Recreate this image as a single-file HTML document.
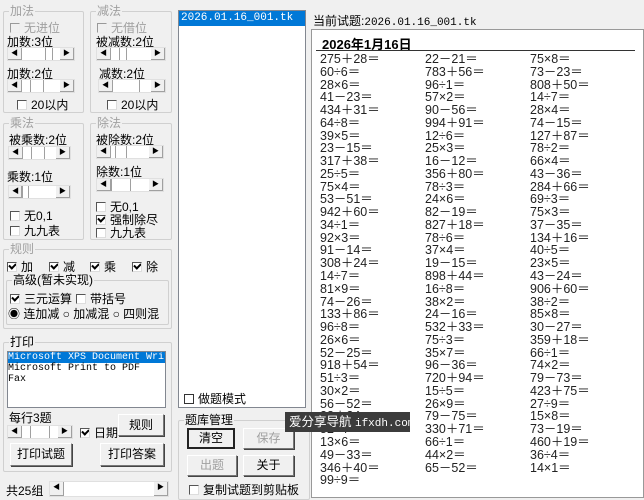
<!DOCTYPE html>
<html><head><meta charset="utf-8"><style>
*{box-sizing:border-box;margin:0;padding:0}
body{width:644px;height:498px;background:#f0f0f0;position:relative;overflow:hidden;font-family:"Liberation Sans","Noto Sans CJK SC",sans-serif;font-size:12px;color:#000}
.a{position:absolute;white-space:nowrap}
.g{position:absolute;border:1px solid #d0d0d0;border-radius:2px}
.gt{position:absolute;top:-8px;left:5px;background:#f0f0f0;padding:0 1px;font-size:12px;line-height:14px}
.dis{color:#a0a0a0}
.sb{position:absolute;height:14px;background:#fff;border:1px solid #e0e0e0}
.sb .l,.sb .r{position:absolute;top:0;width:14px;height:12px;background:#f0f0f0;border-right:1px solid #a0a0a0;border-bottom:1px solid #a0a0a0;font-size:7px;line-height:12px;text-align:center}
.sb .l{left:0}.sb .r{right:0}
.sb .t{position:absolute;top:0;height:12px;border-left:1px solid #a0a0a0;border-right:1px solid #a0a0a0}
.cb{display:inline-block;width:10px;height:10px;border:1px solid #555;border-right-color:#ddd;border-bottom-color:#ddd;background:#fff;vertical-align:-1px;margin-right:4px;font-size:9px;line-height:8px;text-align:center;position:relative;overflow:hidden}
.ck::after{content:"";position:absolute;left:1px;top:0px;width:5px;height:3px;border-left:2px solid #000;border-bottom:2px solid #000;transform:rotate(-45deg)}
.btn{position:absolute;background:#f0f0f0;border:1px solid;border-color:#fff #777 #777 #fff;box-shadow:1px 1px 0 #444;text-align:center;font-size:12px}
.col{position:absolute;top:53px;line-height:12.76px;font-size:12.5px;white-space:pre;font-family:"Liberation Sans","Noto Sans CJK SC",sans-serif;color:#222}
</style></head><body>

<div class="g" style="left:3px;top:11px;width:81px;height:102px"><span class="gt dis">加法</span></div>
<div class="a dis" style="left:10px;top:19px"><span class="cb" style="border-color:#999 #eee #eee #999;background:#f0f0f0"></span>无进位</div>
<div class="a" style="left:7px;top:33px">加数:3位</div>
<div class="sb" style="left:7px;top:47px;width:68px"><div class="l">◀</div><div class="t" style="left:37px;width:8px"></div><div class="r">▶</div></div>
<div class="a" style="left:7px;top:65px">加数:2位</div>
<div class="sb" style="left:7px;top:79px;width:68px"><div class="l">◀</div><div class="t" style="left:22px;width:14px"></div><div class="r">▶</div></div>
<div class="a" style="left:17px;top:96px"><span class="cb"></span>20以内</div>

<div class="g" style="left:90px;top:11px;width:82px;height:102px"><span class="gt dis">减法</span></div>
<div class="a dis" style="left:97px;top:19px"><span class="cb" style="border-color:#999 #eee #eee #999;background:#f0f0f0"></span>无借位</div>
<div class="a" style="left:96px;top:33px">被减数:2位</div>
<div class="sb" style="left:96px;top:47px;width:70px"><div class="l">◀</div><div class="t" style="left:22px;width:8px"></div><div class="r">▶</div></div>
<div class="a" style="left:99px;top:65px">减数:2位</div>
<div class="sb" style="left:98px;top:79px;width:68px"><div class="l">◀</div><div class="t" style="left:40px;width:14px"></div><div class="r">▶</div></div>
<div class="a" style="left:107px;top:96px"><span class="cb"></span>20以内</div>

<div class="g" style="left:3px;top:123px;width:81px;height:117px"><span class="gt dis">乘法</span></div>
<div class="a" style="left:9px;top:131px">被乘数:2位</div>
<div class="sb" style="left:8px;top:146px;width:63px"><div class="l">◀</div><div class="t" style="left:22px;width:14px"></div><div class="r">▶</div></div>
<div class="a" style="left:7px;top:168px">乘数:1位</div>
<div class="sb" style="left:8px;top:185px;width:63px"><div class="l">◀</div><div class="t" style="left:12px;width:8px"></div><div class="r">▶</div></div>
<div class="a" style="left:10px;top:207px"><span class="cb"></span>无0,1</div>
<div class="a" style="left:10px;top:222px"><span class="cb"></span>九九表</div>

<div class="g" style="left:90px;top:123px;width:82px;height:117px"><span class="gt dis">除法</span></div>
<div class="a" style="left:96px;top:131px">被除数:2位</div>
<div class="sb" style="left:96px;top:145px;width:68px"><div class="l">◀</div><div class="t" style="left:18px;width:12px"></div><div class="r">▶</div></div>
<div class="a" style="left:96px;top:163px">除数:1位</div>
<div class="sb" style="left:96px;top:178px;width:68px"><div class="l">◀</div><div class="t" style="left:14px;width:20px"></div><div class="r">▶</div></div>
<div class="a" style="left:96px;top:198px"><span class="cb"></span>无0,1</div>
<div class="a" style="left:96px;top:211px"><span class="cb ck"></span>强制除尽</div>
<div class="a" style="left:96px;top:224px"><span class="cb"></span>九九表</div>

<div class="g" style="left:3px;top:249px;width:169px;height:80px"><span class="gt dis">规则</span></div>
<div class="a" style="left:7px;top:258px"><span class="cb ck"></span>加</div>
<div class="a" style="left:49px;top:258px"><span class="cb ck"></span>减</div>
<div class="a" style="left:90px;top:258px"><span class="cb ck"></span>乘</div>
<div class="a" style="left:132px;top:258px"><span class="cb ck"></span>除</div>
<div class="g" style="left:6px;top:280px;width:163px;height:45px"><span class="gt">高级(暂未实现)</span></div>
<div class="a" style="left:10px;top:290px"><span class="cb ck"></span>三元运算</div>
<div class="a" style="left:76px;top:290px"><span class="cb"></span>带括号</div>
<div class="a" style="left:8px;top:305px">◉ 连加减 ○ 加减混 ○ 四则混</div>

<div class="g" style="left:3px;top:342px;width:169px;height:130px"><span class="gt">打印</span></div>
<div class="a" style="left:7px;top:351px;width:159px;height:57px;background:#fff;border:1px solid #828790;font-family:'Liberation Mono',monospace;font-size:10px;line-height:11px;overflow:hidden">
<div style="background:#0078d7;color:#fff">Microsoft XPS Document Writer</div><div>Microsoft Print to PDF</div><div>Fax</div></div>
<div class="a" style="left:9px;top:409px">每行3题</div>
<div class="sb" style="left:7px;top:425px;width:66px"><div class="l">◀</div><div class="t" style="left:22px;width:20px"></div><div class="r">▶</div></div>
<div class="a" style="left:80px;top:424px"><span class="cb ck"></span>日期</div>
<div class="btn" style="left:118px;top:414px;width:46px;height:22px;line-height:20px">规则</div>
<div class="btn" style="left:10px;top:443px;width:62px;height:23px;line-height:21px">打印试题</div>
<div class="btn" style="left:100px;top:443px;width:64px;height:23px;line-height:21px">打印答案</div>

<div class="a" style="left:6px;top:482px">共25组</div>
<div class="sb" style="left:49px;top:481px;width:120px;height:16px"><div class="l" style="height:14px">◀</div><div class="r" style="height:14px">▶</div></div>

<div class="a" style="left:178px;top:10px;width:128px;height:398px;background:#fff;border:1px solid #828790"></div>
<div class="a" style="left:179px;top:11px;width:126px;height:15px;background:#0078d7;color:#fff;font-family:'Liberation Mono','Noto Sans CJK SC',monospace;font-size:11px;line-height:15px;padding-left:2px">2026.01.16_001.tk</div>
<div class="a" style="left:184px;top:390px"><span class="cb" style="border-color:#333"></span>做题模式</div>

<div class="g" style="left:178px;top:420px;width:132px;height:80px"><span class="gt">题库管理</span></div>
<div class="btn" style="left:187px;top:428px;width:48px;height:21px;line-height:17px;border:2px solid #222;box-shadow:none">清空</div>
<div class="btn dis" style="left:243px;top:428px;width:51px;height:21px;line-height:19px">保存</div>
<div class="btn dis" style="left:187px;top:455px;width:50px;height:21px;line-height:19px">出题</div>
<div class="btn" style="left:243px;top:455px;width:51px;height:21px;line-height:19px">关于</div>
<div class="a" style="left:189px;top:481px"><span class="cb"></span>复制试题到剪贴板</div>

<div class="a" style="left:313px;top:12px;font-size:12px">当前试题:<span style="font-family:'Liberation Mono',monospace;font-size:11px">2026.01.16_001.tk</span></div>
<div class="a" style="left:311px;top:29px;width:333px;height:469px;background:#fff;border:1px solid #999"></div>
<div class="a" style="left:322px;top:34px;font-weight:bold;font-size:13px">2026年1月16日</div>
<div class="a" style="left:316px;top:50px;width:319px;height:1px;background:#333"></div>
<div class="col" style="left:320px">275＋28＝
60÷6＝
28×6＝
41－23＝
434＋31＝
64÷8＝
39×5＝
23－15＝
317＋38＝
25÷5＝
75×4＝
53－51＝
942＋60＝
34÷1＝
92×3＝
91－14＝
308＋24＝
14÷7＝
81×9＝
74－26＝
133＋86＝
96÷8＝
26×6＝
52－25＝
918＋54＝
51÷3＝
30×2＝
56－52＝
28＋24＝
52÷4＝
13×6＝
49－33＝
346＋40＝
99÷9＝</div>
<div class="col" style="left:425px">22－21＝
783＋56＝
96÷1＝
57×2＝
90－56＝
994＋91＝
12÷6＝
25×3＝
16－12＝
356＋80＝
78÷3＝
24×6＝
82－19＝
827＋18＝
78÷6＝
37×4＝
19－15＝
898＋44＝
16÷8＝
38×2＝
24－16＝
532＋33＝
75÷3＝
35×7＝
96－36＝
720＋94＝
15÷5＝
26×9＝
79－75＝
330＋71＝
66÷1＝
44×2＝
65－52＝</div>
<div class="col" style="left:530px">75×8＝
73－23＝
808＋50＝
14÷7＝
28×4＝
74－15＝
127＋87＝
78÷2＝
66×4＝
43－36＝
284＋66＝
69÷3＝
75×3＝
37－35＝
134＋16＝
40÷5＝
23×5＝
43－24＝
906＋60＝
38÷2＝
85×8＝
30－27＝
359＋18＝
66÷1＝
74×2＝
79－73＝
423＋75＝
27÷9＝
15×8＝
73－19＝
460＋19＝
36÷4＝
14×1＝</div>

<div class="a" style="left:285px;top:412px;width:125px;height:20px;background:#3c3c3c;color:#fff;font-size:12.5px;line-height:20px;padding-left:4px">爱分享导航 <span style="font-family:'Liberation Mono',monospace;font-size:11px">ifxdh.com</span></div>
</body></html>
